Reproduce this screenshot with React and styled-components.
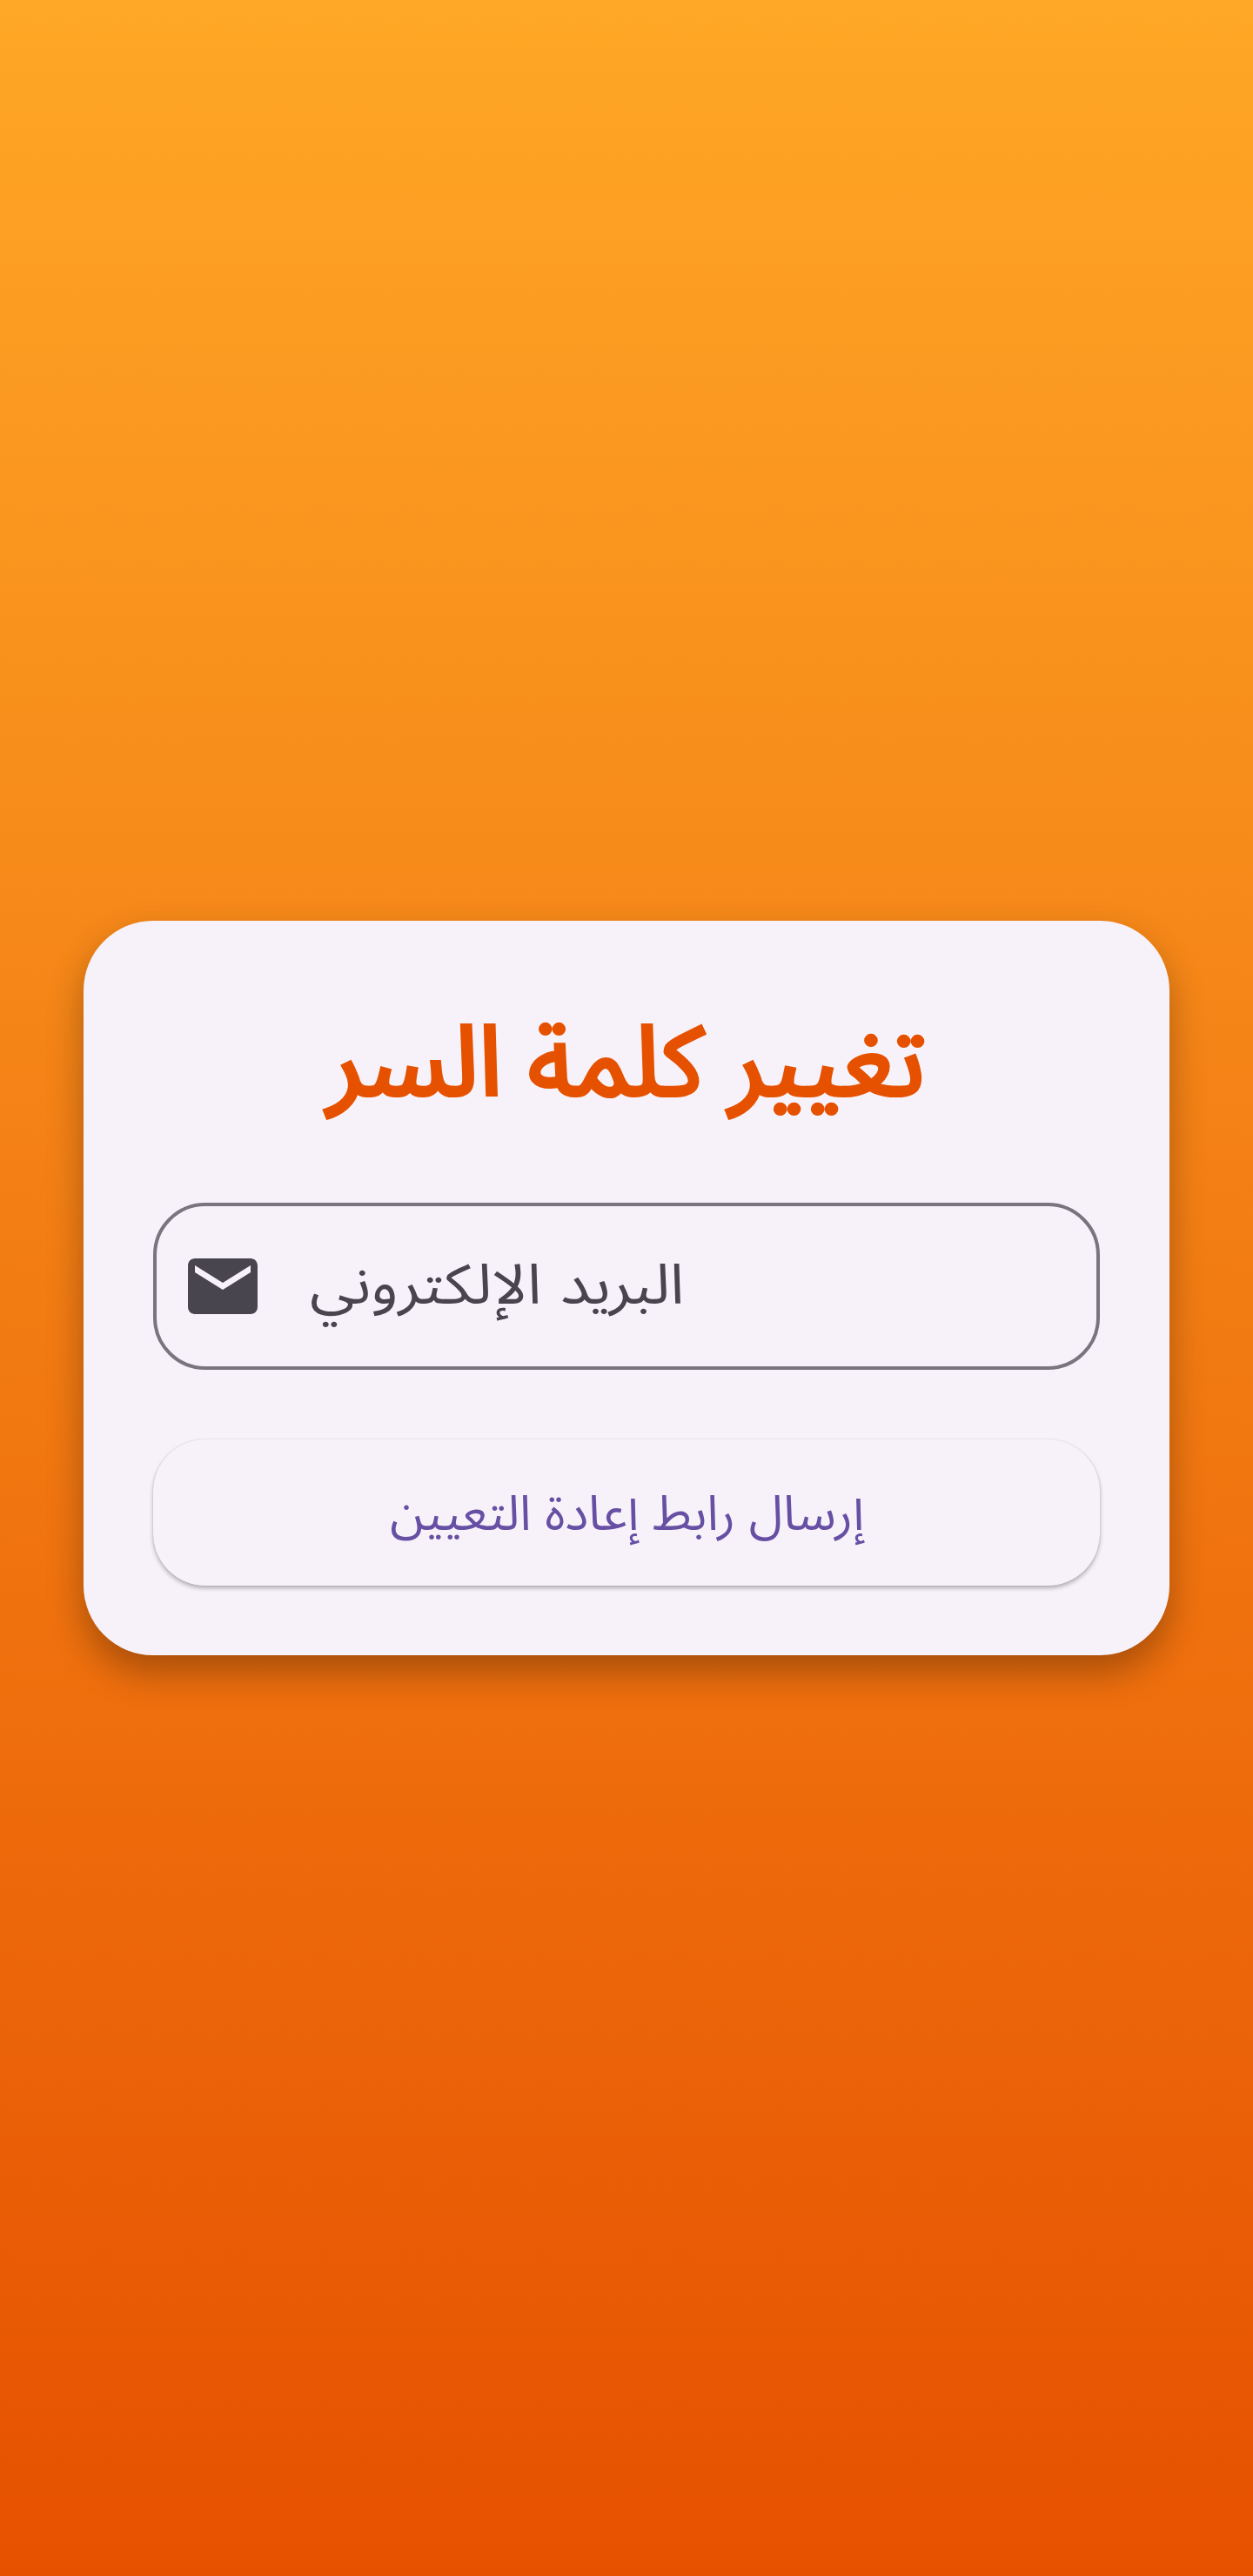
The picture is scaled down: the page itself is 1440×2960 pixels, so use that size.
import React from "react";
import styled, { createGlobalStyle } from "styled-components";

const fontStack = `"Noto Sans Arabic", "Noto Sans", "DejaVu Sans", sans-serif`;

const Global = createGlobalStyle`
  * { box-sizing: border-box; }
  body { margin: 0; }
`;

const Screen = styled.main`
  min-height: 2960px;
  display: flex;
  align-items: center;
  justify-content: center;
  background: linear-gradient(180deg, #ffa726 0%, #e65100 100%);
  font-family: ${fontStack};
`;

const Card = styled.section`
  width: 1248px;
  height: 844px;
  padding: 80px;
  display: flex;
  flex-direction: column;
  border-radius: 80px;
  background: #f7f2fa;
  box-shadow: 0 20px 42px rgba(0, 0, 0, 0.3);
`;

const Title = styled.h1`
  margin: 0 0 80px;
  height: 164px;
  line-height: 169px;
  text-align: center;
  white-space: nowrap;
  font-size: 112px;
  font-weight: 400;
  -webkit-text-stroke: 4.2px currentColor;
  color: #e65100;
`;

/* Arabic script ignores letter-spacing, so words are widened by a transform */
const Word = styled.span`
  display: inline-block;
  margin: 0 ${(p) => p.$pad}px;
  transform: scaleX(${(p) => p.$stretch});
`;

const Field = styled.label`
  height: 192px;
  border: 4px solid #79747e;
  border-radius: 60px;
  display: flex;
  align-items: center;
  padding-left: 28px;
  gap: 52px;
  color: #49454f;
`;

const Hint = styled.span`
  padding-bottom: 2px;
  font-size: 64px;
  word-spacing: 3px;
  white-space: nowrap;
  transform: scaleX(1.093);
  transform-origin: left center;
`;

const Button = styled.button`
  margin-top: 80px;
  height: 168px;
  padding: 4px 0 0 2px;
  border: 0;
  border-radius: 60px;
  background: #f7f2fa;
  color: #6750a4;
  font: 400 56px ${fontStack};
  box-shadow: 0 3px 5px rgba(0, 0, 0, 0.28), 0 0 2px rgba(0, 0, 0, 0.12);
`;

const ButtonText = styled.span`
  display: inline-block;
  word-spacing: 1px;
  white-space: nowrap;
  transform: scaleX(1.01);
`;

const MailIcon = () => (
  <svg width="96" height="96" viewBox="0 0 24 24" fill="currentColor">
    <path d="M20 4H4c-1.1 0-1.99.9-1.99 2L2 18c0 1.1.9 2 2 2h16c1.1 0 2-.9 2-2V6c0-1.1-.9-2-2-2zm0 4-8 5-8-5V6l8 5 8-5v2z" />
  </svg>
);

export default function App() {
  return (
    <Screen>
      <Global />
      <Card>
        <Title dir="rtl">
          <Word $stretch={1.028} $pad={3.1}>تغيير</Word>{" "}
          <Word $stretch={1.013} $pad={1.4}>كلمة</Word>{" "}
          <Word $stretch={1.031} $pad={3}>السر</Word>
        </Title>
        <Field>
          <MailIcon />
          <Hint dir="rtl">البريد الإلكتروني</Hint>
        </Field>
        <Button dir="rtl">
          <ButtonText>إرسال رابط إعادة التعيين</ButtonText>
        </Button>
      </Card>
    </Screen>
  );
}
